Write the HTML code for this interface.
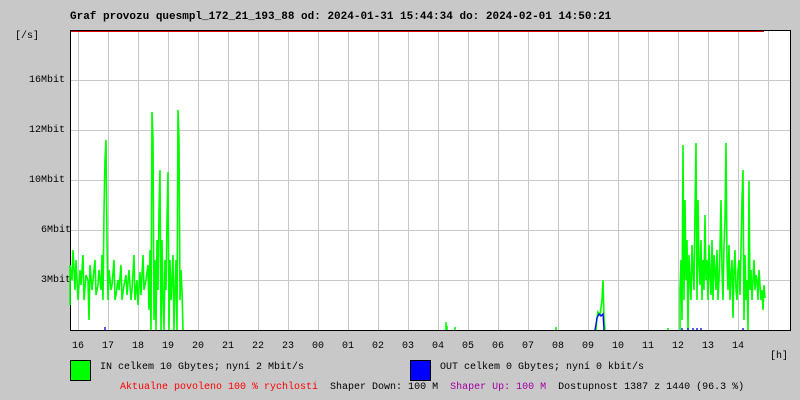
<!DOCTYPE html>
<html><head><meta charset="utf-8"><style>
body{margin:0;width:800px;height:400px;background:#c8c8c8;position:relative;overflow:hidden;font-family:"Liberation Mono",monospace;font-size:10px;color:#000}
.t{position:absolute;white-space:pre;line-height:12px}
.h{position:absolute;top:341px;line-height:12px}
</style></head><body>
<div class="t" style="left:70px;top:11px;font-size:11px;font-weight:bold">Graf provozu quesmpl_172_21_193_88 od: 2024-01-31 15:44:34 do: 2024-02-01 14:50:21</div>
<div class="t" style="left:15px;top:31px">[/s]</div>
<div class="t" style="left:29px;top:75px">16Mbit</div>
<div class="t" style="left:29px;top:125px">12Mbit</div>
<div class="t" style="left:29px;top:175px">10Mbit</div>
<div class="t" style="left:35px;top:225px"> 6Mbit</div>
<div class="t" style="left:35px;top:275px"> 3Mbit</div>
<svg style="position:absolute;left:0;top:0" width="800" height="400">
<rect x="70.5" y="30.5" width="720" height="300" fill="#fff" stroke="#000"/>
<g stroke="#c8c8c8" stroke-width="1">
<path d="M71 80.5H790M71 130.5H790M71 180.5H790M71 230.5H790M71 280.5H790"/>
<path d="M78.5 31V330M108.5 31V330M138.5 31V330M168.5 31V330M198.5 31V330M228.5 31V330M258.5 31V330M288.5 31V330M318.5 31V330M348.5 31V330M378.5 31V330M408.5 31V330M438.5 31V330M468.5 31V330M498.5 31V330M528.5 31V330M558.5 31V330M588.5 31V330M618.5 31V330M648.5 31V330M678.5 31V330M708.5 31V330M738.5 31V330M768.5 31V330"/>
</g>
<path d="M71 31.5H764" stroke="#e00000"/>
<g fill="none" stroke="#00ff00" stroke-width="1.6">
<path d="M70,305 V265 L72,280 L73,250 L75,290 L76,260 L78,300 L80,270 L81,285 L83,255 L84,300 L86,275 L88,280 L89,320 L90,265 L92,290 L93,280 L95,260 L96,295 L98,285 L99,270 L101,290 L102,255 L103,300 L104,212 L105,160 L106,140 L107,240 L108,300 L109,270 L111,290 L112,285 L114,260 L115,300 L116,295 L118,280 L119,290 L121,265 L122,300 L124,285 L126,275 L127,295 L129,270 L130,285 L131,300 L132,290 L134,255 L135,300 L137,280 L138,305 L140,272 L141,295 L143,255 L144,290 L146,280 L148,265 L149,310 L150,250 L151,330 L152,112 L153,140 L154,320 L155,260 L156,330 L157,240 L158,290 L159,210 L160,170 L161,330 L162,240 L163,300 L164,330 L165,260 L166,290 L167,220 L168,172 L169,330 L170,260 L171,300 L172,280 L173,255 L174,330 L175,290 L176,260 L177,330 L178,110 L179,140 L180,300 L181,270 L182,290 L183,330"/>
<path d="M680,330 V290 L681,260 L682,320 L683,145 L684,300 L685,200 L686,280 L687,240 L688,330 L689,255 L690,280 L691,300 L692,245 L693,270 L694,290 L695,210 L696,143 L697,300 L698,200 L699,265 L700,285 L701,240 L702,300 L703,260 L704,290 L705,215 L706,280 L707,260 L708,300 L709,245 L710,275 L711,295 L712,240 L713,300 L714,255 L715,270 L716,290 L717,250 L718,300 L719,280 L720,250 L721,200 L722,270 L723,300 L724,245 L725,220 L726,143 L727,260 L728,290 L729,245 L730,300 L731,275 L732,260 L733,318 L734,270 L735,250 L736,290 L737,300 L738,270 L739,260 L740,295 L741,250 L742,200 L743,170 L744,320 L745,255 L746,300 L747,280 L748,330 L749,181 L750,290 L751,270 L752,300 L753,280 L754,260 L755,290 L756,275 L757,280 L758,300 L759,270 L760,285 L761,300 L762,290 L763,310 L764,285 L765,298"/>
<path d="M596,330 L597,318 L598,312 L600,315 L602,300 L603,280 L604,318 L605,330"/>
<path d="M446,330V322M447,330V326M455,330V327M556,330V327M668,330V328"/>
</g>
<g fill="none" stroke="#0000ff" stroke-width="1.3">
<path d="M595,330 L597,318 L599,314 L601,316 L603,314 L604,330"/>
<path d="M105,330V327M682,330V328M688,330V328M693,330V328M697,330V328M701,330V328M743,330V328"/>
</g>
<rect x="70.5" y="360.5" width="20" height="20" fill="#00ff00" stroke="#000"/>
<rect x="410.5" y="360.5" width="20" height="20" fill="#0000ff" stroke="#000"/>
</svg>
<div class="h" style="left:72px">16</div><div class="h" style="left:102px">17</div><div class="h" style="left:132px">18</div><div class="h" style="left:162px">19</div><div class="h" style="left:192px">20</div><div class="h" style="left:222px">21</div><div class="h" style="left:252px">22</div><div class="h" style="left:282px">23</div><div class="h" style="left:312px">00</div><div class="h" style="left:342px">01</div><div class="h" style="left:372px">02</div><div class="h" style="left:402px">03</div><div class="h" style="left:432px">04</div><div class="h" style="left:462px">05</div><div class="h" style="left:492px">06</div><div class="h" style="left:522px">07</div><div class="h" style="left:552px">08</div><div class="h" style="left:582px">09</div><div class="h" style="left:612px">10</div><div class="h" style="left:642px">11</div><div class="h" style="left:672px">12</div><div class="h" style="left:702px">13</div><div class="h" style="left:732px">14</div>
<div class="t" style="left:770px;top:351px">[h]</div>
<div class="t" style="left:100px;top:362px">IN celkem 10 Gbytes; nyní 2 Mbit/s</div>
<div class="t" style="left:440px;top:362px">OUT celkem 0 Gbytes; nyní 0 kbit/s</div>
<div class="t" style="left:120px;top:382px"><span style="color:#ff0000">Aktualne povoleno 100 % rychlosti</span>  Shaper Down: 100 M  <span style="color:#a000a0">Shaper Up: 100 M</span>  Dostupnost 1387 z 1440 (96.3 %)</div>
</body></html>
